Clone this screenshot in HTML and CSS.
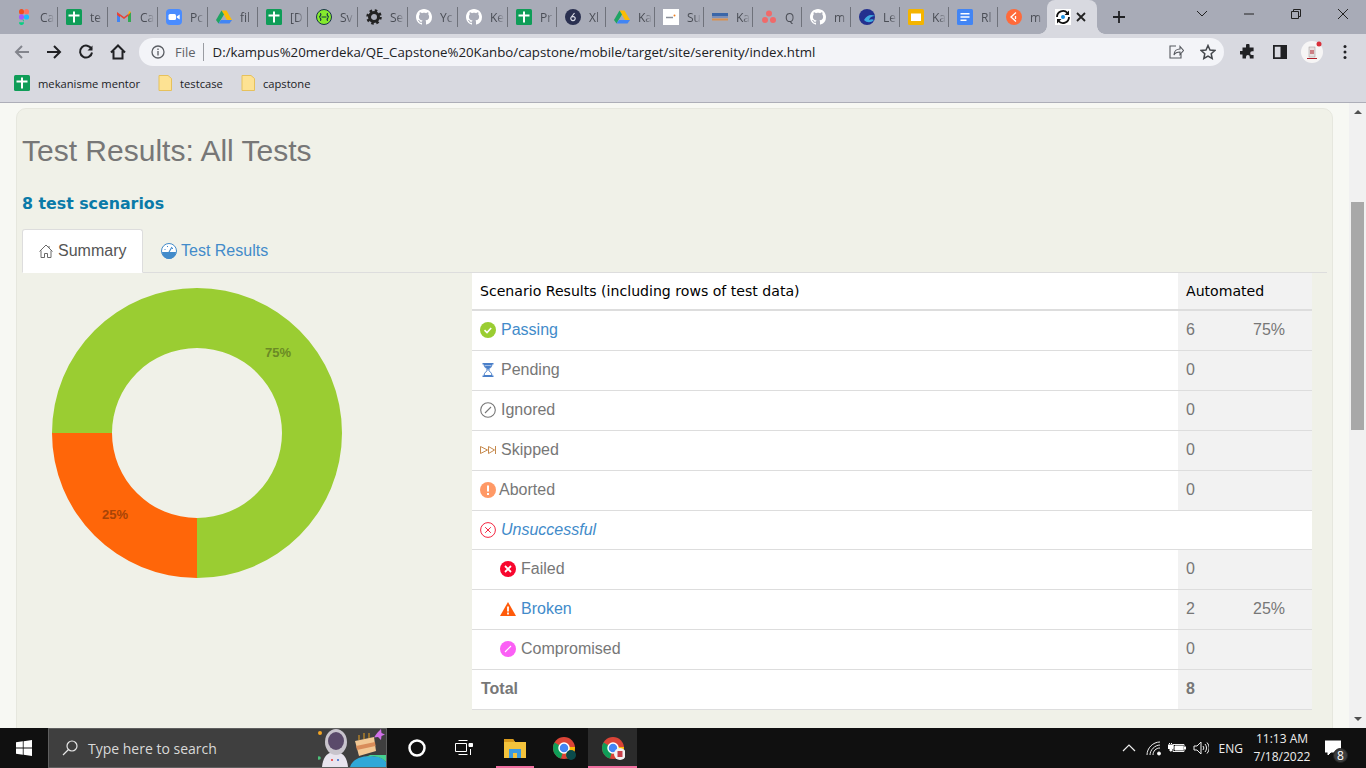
FILE: index.html
```html
<!DOCTYPE html>
<html lang="en">
<head>
<meta charset="utf-8">
<title>Serenity Reports</title>
<link rel="stylesheet" href="styles.css">
</head>
<body>
<svg class="defs" width="0" height="0" aria-hidden="true">
  <symbol id="f-sheet" viewBox="0 0 16 16"><rect width="16" height="16" rx="1.500" fill="#0f9d58"/><path d="M7 2.500h2v3h4.500v2H9v6H7v-6H2.500v-2H7z" fill="#fff"/></symbol>
  <symbol id="f-figma" viewBox="0 0 16 16"><rect x="3" y="0" width="5" height="5.400" rx="2.500" fill="#f24e1e"/><rect x="8" y="0" width="5" height="5.400" rx="2.500" fill="#ff7262"/><rect x="3" y="5.300" width="5" height="5.400" rx="2.500" fill="#a259ff"/><circle cx="10.500" cy="8" r="2.600" fill="#1abcfe"/><path d="M3 13.300a2.500 2.600 0 0 1 5-.1V10.700H5.500A2.500 2.600 0 0 0 3 13.300a2.500 2.600 0 0 0 5 0z" fill="#0acf83"/></symbol>
  <symbol id="f-gmail" viewBox="0 0 16 16"><path d="M1 3v10h3V7l4 3 4-3v6h3V3l-7 5z" fill="#ea4335"/><path d="M1 3v3l3 2.200V13H1z" fill="#4285f4"/><path d="M15 3v10h-3V7.500z" fill="#34a853"/><path d="M13 2l2 1-3 3z" fill="#fbbc04"/></symbol>
  <symbol id="f-zoom" viewBox="0 0 16 16"><rect width="16" height="16" rx="4" fill="#4a8cff"/><rect x="2.500" y="5" width="7.500" height="6" rx="1.500" fill="#fff"/><path d="M10.700 7.500l3-2v5l-3-2z" fill="#fff"/></symbol>
  <symbol id="f-drive" viewBox="0 0 16 16"><path d="M5.500 1.500h5L16 11h-5z" fill="#fbbc04"/><path d="M5.500 1.500L0 11l2.500 3.500L8 5.500z" fill="#1fa463"/><path d="M2.500 14.500h11L16 11H5z" fill="#4285f4"/></symbol>
  <symbol id="f-swag" viewBox="0 0 16 16"><circle cx="8" cy="8" r="7.500" fill="#85ea2d" stroke="#173647"/><path d="M4 4.500c2 0 0 3.500-1 3.500 1 0 3 3.500 1 3.500M12 4.500c-2 0 0 3.500 1 3.500-1 0-3 3.500-1 3.500M5.500 8h5" fill="none" stroke="#173647" stroke-width="1.200"/></symbol>
  <symbol id="f-gear" viewBox="0 0 16 16"><circle cx="8" cy="8" r="4.500" fill="none" stroke="#222" stroke-width="3"/><circle cx="8" cy="8" r="6.500" fill="none" stroke="#222" stroke-width="2.500" stroke-dasharray="2.500 2.600"/></symbol>
  <symbol id="f-gh" viewBox="0 0 16 16"><path fill="#fff" d="M8 0C3.580 0 0 3.580 0 8c0 3.540 2.290 6.530 5.470 7.590.4.070.55-.17.55-.38 0-.19-.01-.82-.01-1.490-2.010.37-2.530-.49-2.690-.94-.09-.23-.48-.94-.82-1.130-.28-.15-.68-.52-.01-.53.63-.01 1.080.58 1.230.82.720 1.210 1.870.87 2.330.66.070-.52.280-.87.510-1.070-1.780-.2-3.640-.89-3.640-3.950 0-.87.310-1.590.820-2.150-.08-.2-.36-1.020.08-2.120 0 0 .67-.21 2.200.82.640-.18 1.320-.27 2-.27s1.360.09 2 .27c1.530-1.040 2.200-.82 2.200-.82.440 1.100.16 1.920.08 2.120.51.56.82 1.270.82 2.150 0 3.070-1.870 3.750-3.650 3.950.29.25.54.73.54 1.480 0 1.070-.01 1.930-.01 2.200 0 .21.15.46.55.38A8.010 8.010 0 0 0 16 8c0-4.420-3.580-8-8-8z"/></symbol>
  <symbol id="f-dark" viewBox="0 0 16 16"><circle cx="8" cy="8" r="8" fill="#2a3050"/><path d="M9.500 4L6 8.500a2.200 2.200 0 1 0 4 0 2 2 0 0 0-3-.5" fill="none" stroke="#d8dae4" stroke-width="1.200"/></symbol>
  <symbol id="f-white" viewBox="0 0 16 16"><rect width="16" height="16" fill="#fff"/><path d="M3 8.500h7" stroke="#8a8f99" stroke-width="1.500"/><circle cx="11.500" cy="6.500" r="1" fill="#f08020"/></symbol>
  <symbol id="f-kem" viewBox="0 0 16 16"><path d="M0 4h16v3H0z" fill="#3b66a8"/><path d="M0 7h16v2H0z" fill="#7c8fb8"/><path d="M0 9.500h16v2H0z" fill="#d89050"/></symbol>
  <symbol id="f-asana" viewBox="0 0 16 16"><circle cx="8" cy="4.500" r="3" fill="#f06a6a"/><circle cx="4" cy="11" r="3" fill="#f06a6a"/><circle cx="12" cy="11" r="3" fill="#f06a6a"/></symbol>
  <symbol id="f-le" viewBox="0 0 16 16"><circle cx="8" cy="8" r="8" fill="#23308f"/><path d="M5 11c3-5 7-6 11-4-3 0-5 1-6 4 2-1 4-1 5 0-3 3-7 3-10 0z" fill="#3fa9e0"/></symbol>
  <symbol id="f-slides" viewBox="0 0 16 16"><rect width="16" height="16" rx="1.500" fill="#f4b400"/><rect x="3" y="4.500" width="10" height="7.500" fill="#fff"/></symbol>
  <symbol id="f-docs" viewBox="0 0 16 16"><rect width="16" height="16" rx="1.500" fill="#4285f4"/><path d="M3.500 4h9v1.500h-9zM3.500 7.300h9v1.500h-9zM3.500 10.500h6V12h-6z" fill="#fff"/></symbol>
  <symbol id="f-orange" viewBox="0 0 16 16"><circle cx="8" cy="8" r="8" fill="#ff6a3a"/><path d="M10 3.500L5 8l5 4.500M9.500 7v3" fill="none" stroke="#fff" stroke-width="1.300"/></symbol>
  <symbol id="f-ser" viewBox="0 0 16 16"><rect width="16" height="16" fill="#fff"/><path d="M2 8a6 6 0 0 1 10.500-4M14 8a6 6 0 0 1-10.500 4" fill="none" stroke="#111" stroke-width="1.800"/><path d="M14 1.500v4.500H9.500zM2 14.500V10h4.500z" fill="#111"/><circle cx="8" cy="8" r="2" fill="#1a8fe0"/></symbol>
</svg>

<header class="chrome">
  <div class="tabstrip">
    <div class="tab"><svg class="fav"><use href="#f-figma"/></svg><span class="tab-t">Ca</span></div>
    <div class="tab"><svg class="fav"><use href="#f-sheet"/></svg><span class="tab-t">te</span></div>
    <div class="tab"><svg class="fav"><use href="#f-gmail"/></svg><span class="tab-t">Ca</span></div>
    <div class="tab"><svg class="fav"><use href="#f-zoom"/></svg><span class="tab-t">Pc</span></div>
    <div class="tab"><svg class="fav"><use href="#f-drive"/></svg><span class="tab-t">fil</span></div>
    <div class="tab"><svg class="fav"><use href="#f-sheet"/></svg><span class="tab-t">[D</span></div>
    <div class="tab"><svg class="fav"><use href="#f-swag"/></svg><span class="tab-t">Sv</span></div>
    <div class="tab"><svg class="fav"><use href="#f-gear"/></svg><span class="tab-t">Se</span></div>
    <div class="tab"><svg class="fav"><use href="#f-gh"/></svg><span class="tab-t">Yc</span></div>
    <div class="tab"><svg class="fav"><use href="#f-gh"/></svg><span class="tab-t">Ke</span></div>
    <div class="tab tab-n"><svg class="fav"><use href="#f-sheet"/></svg><span class="tab-t">Pr</span></div>
    <div class="tab tab-n"><svg class="fav"><use href="#f-dark"/></svg><span class="tab-t">Xl</span></div>
    <div class="tab tab-n"><svg class="fav"><use href="#f-drive"/></svg><span class="tab-t">Ka</span></div>
    <div class="tab tab-n"><svg class="fav"><use href="#f-white"/></svg><span class="tab-t">Su</span></div>
    <div class="tab tab-n"><svg class="fav"><use href="#f-kem"/></svg><span class="tab-t">Ka</span></div>
    <div class="tab tab-n"><svg class="fav"><use href="#f-asana"/></svg><span class="tab-t">Q</span></div>
    <div class="tab tab-n"><svg class="fav"><use href="#f-gh"/></svg><span class="tab-t">m</span></div>
    <div class="tab tab-n"><svg class="fav"><use href="#f-le"/></svg><span class="tab-t">Le</span></div>
    <div class="tab tab-n"><svg class="fav"><use href="#f-slides"/></svg><span class="tab-t">Ka</span></div>
    <div class="tab tab-n"><svg class="fav"><use href="#f-docs"/></svg><span class="tab-t">Rl</span></div>
    <div class="tab tab-n tab-last"><svg class="fav"><use href="#f-orange"/></svg><span class="tab-t">m</span></div>
    <div class="tab-active"><svg class="fav"><use href="#f-ser"/></svg><svg class="tab-x" viewBox="0 0 10 10"><path d="M1 1l8 8M9 1l-8 8"/></svg></div>
    <svg class="newtab" viewBox="0 0 12 12"><path d="M6 0v12M0 6h12"/></svg>
    <div class="winctl">
      <svg class="w-ic w-chev" viewBox="0 0 12 8"><path d="M1 1l5 5 5-5"/></svg>
      <svg class="w-ic w-min" viewBox="0 0 12 12"><path d="M1 6h10"/></svg>
      <svg class="w-ic w-rest" viewBox="0 0 12 12"><path d="M1.500 3.500h7v7h-7zM3.500 3.500v-2h7v7h-2"/></svg>
      <svg class="w-ic w-close" viewBox="0 0 12 12"><path d="M1 1l10 10M11 1L1 11"/></svg>
    </div>
  </div>
  <div class="toolbar">
    <svg class="tb back" viewBox="0 0 16 16"><path d="M15 8H2M8 2L2 8l6 6"/></svg>
    <svg class="tb" viewBox="0 0 16 16"><path d="M1 8h13M8 2l6 6-6 6"/></svg>
    <svg class="tb" viewBox="0 0 16 16"><path d="M13.500 5A6 6 0 1 0 14 8.500"/><path class="solid" d="M14.500 1.500v5h-5z"/></svg>
    <svg class="tb" viewBox="0 0 16 16"><path d="M1 8.500L8 1.500l7 7M3.500 7v7.500h9V7"/></svg>
    <div class="omni">
      <svg class="info" viewBox="0 0 14 14"><circle cx="7" cy="7" r="6"/><path d="M7 6v4.500M7 3.500v1.500"/></svg>
      <span class="scheme">File</span>
      <span class="omni-sep"></span>
      <span class="url">D:/kampus%20merdeka/QE_Capstone%20Kanbo/capstone/mobile/target/site/serenity/index.html</span>
      <svg class="omni-ic" viewBox="0 0 16 16"><path d="M8 2h-6v12h11v-4M6 11c0-4 3-6 6-6V2.500l3.500 4-3.500 4V8c-3 0-5 1-6 3z"/></svg>
      <svg class="omni-ic star" viewBox="0 0 16 16"><path d="M8 1.500l2 4.500 4.800.5-3.600 3.200 1 4.800L8 12.100l-4.200 2.400 1-4.800L1.200 6.500 6 6z"/></svg>
    </div>
    <svg class="ext" viewBox="0 0 16 16"><path d="M6 1.500a1.800 1.800 0 0 1 3.600 0V3.500h4v3.800h-1.500a1.900 1.900 0 0 0 0 3.800h1.500v3.400H9.800v-1.500a1.900 1.900 0 0 0-3.800 0v1.500H2.500v-4H1a1.800 1.800 0 0 1 0-3.600h1.500V3.500H6z"/></svg>
    <svg class="panel" viewBox="0 0 14 14"><path fill-rule="evenodd" d="M0 0h14v14H0zM1.800 1.800v10.400h5.700V1.800z"/></svg>
    <svg class="avatar" viewBox="0 0 22 22"><circle cx="11" cy="11" r="11" fill="#f6f5f5"/><rect x="8" y="6" width="6" height="10" fill="#e8e0e0" stroke="#999" stroke-width=".5"/><path d="M9.500 9h1v4h-1zM11.500 9h1v4h-1z" fill="#b0202a"/><rect x="6" y="17" width="10" height="1" fill="#b0202a"/><circle cx="18" cy="3" r="2.500" fill="#d9303a"/></svg>
    <svg class="dots" viewBox="0 0 4 16"><circle cx="2" cy="2.500" r="1.500"/><circle cx="2" cy="8" r="1.500"/><circle cx="2" cy="13.500" r="1.500"/></svg>
  </div>
  <nav class="bookmarks">
    <svg class="bm-fav"><use href="#f-sheet"/></svg><span class="bm">mekanisme mentor</span>
    <svg class="folder" viewBox="0 0 14 16"><path d="M1 .5h9l3.500 3V15.500H1z"/></svg><span class="bm">testcase</span>
    <svg class="folder" viewBox="0 0 14 16"><path d="M1 .5h9l3.500 3V15.500H1z"/></svg><span class="bm">capstone</span>
  </nav>
</header>

<div class="viewport">
  <main class="content">
    <section class="card">
      <h2 class="title">Test Results: All Tests</h2>
      <h3 class="count">8 test scenarios</h3>
      <div class="tabs">
        <a class="rtab rtab-on"><svg class="rtab-ic home" viewBox="0 0 16 16"><path d="M1.500 8.500L8 2l6.500 6.500M3 7.500V14.500h3.500v-4h3v4H13V7.500M11 3v2"/></svg>Summary</a>
        <a class="rtab"><svg class="rtab-ic" viewBox="0 0 16 16"><circle cx="8" cy="8" r="7.500" fill="#fff" stroke="#428bca"/><path d="M1 9h14a7 7 0 0 1-14 0z" fill="#428bca"/><path d="M8 9l3-5" stroke="#428bca" stroke-width="1.200"/><path d="M3.500 6.500h1M6 3.500h1M11 5.500h1" stroke="#428bca"/></svg>Test Results</a>
      </div>
      <div class="summary">
        <div class="chart-col">
          <svg class="donut" width="290" height="290" viewBox="0 0 290 290" role="img" aria-label="Result chart">
            <path fill="#9acd32" d="M145 290A145 145 0 1 0 0 145H60A85 85 0 1 1 145 230Z"/>
            <path fill="#ff6609" d="M0 145A145 145 0 0 0 145 290V230A85 85 0 0 1 60 145Z"/>
            <text class="lbl lbl-g" x="226" y="66">75%</text>
            <text class="lbl lbl-o" x="63" y="228">25%</text>
          </svg>
        </div>
        <table class="res">
          <colgroup><col class="c1"><col class="c2"><col class="c3"></colgroup>
          <thead>
            <tr><th>Scenario Results (including rows of test data)</th><th class="auto" colspan="2">Automated</th></tr>
          </thead>
          <tbody>
            <tr><td><svg class="ic" viewBox="0 0 16 16"><circle cx="8" cy="8" r="8" fill="#9acd32"/><path d="M4.500 8.200l2.500 2.300 4.200-4.500" fill="none" stroke="#fff" stroke-width="1.600"/></svg><a class="lnk">Passing</a></td><td class="v">6</td><td class="v p">75%</td></tr>
            <tr><td><svg class="ic" viewBox="0 0 16 16"><path d="M2.500 1h11v1.500h-11zM2.500 13.500h11V15h-11z" fill="#4a7fc9"/><path d="M4 2.500h8c0 3-3 4-3.300 5.500.3 1.500 3.300 2.500 3.300 5.500H4c0-3 3-4 3.300-5.500C7 6.500 4 5.500 4 2.500z" fill="none" stroke="#4a7fc9"/><path d="M4.500 3.500h7C11 5.500 8.500 6.500 8 8c-.5-1.500-3-2.500-3.500-4.500z" fill="#4a7fc9"/></svg><span>Pending</span></td><td class="v">0</td><td class="v p"></td></tr>
            <tr><td><svg class="ic" viewBox="0 0 16 16"><circle cx="8" cy="8" r="7.300" fill="none" stroke="#777" stroke-width="1.100"/><path d="M5 11l6-6" stroke="#777" stroke-width="1.100"/></svg><span>Ignored</span></td><td class="v">0</td><td class="v p"></td></tr>
            <tr><td><svg class="ic" viewBox="0 0 16 16"><path d="M.5 4.500l7 3.500-7 3.500zM8.500 4.500l6 3.500-6 3.500zM15.500 4v8" fill="none" stroke="#c68a4e" stroke-width="1"/></svg><span>Skipped</span></td><td class="v">0</td><td class="v p"></td></tr>
            <tr><td><svg class="ic ic-tight" viewBox="0 0 16 16"><circle cx="8" cy="8" r="8" fill="#ff9966"/><path d="M8 3.500v6M8 11v2" stroke="#fff" stroke-width="2"/></svg><span>Aborted</span></td><td class="v">0</td><td class="v p"></td></tr>
            <tr class="uns"><td colspan="3"><svg class="ic" viewBox="0 0 16 16"><circle cx="8" cy="8" r="7.400" fill="none" stroke="#f4253f" stroke-width="1"/><path d="M5.200 5.200l5.600 5.600M10.800 5.200l-5.600 5.600" stroke="#f4253f"/></svg><a class="lnk em">Unsuccessful</a></td></tr>
            <tr class="sub"><td><svg class="ic" viewBox="0 0 16 16"><circle cx="8" cy="8" r="8" fill="#f8072e"/><path d="M5 5l6 6M11 5l-6 6" stroke="#fff" stroke-width="1.800"/></svg><span>Failed</span></td><td class="v">0</td><td class="v p"></td></tr>
            <tr class="sub"><td><svg class="ic" viewBox="0 0 16 16"><path d="M8 1l8 14H0z" fill="#ff5a0a"/><path d="M8 5.500v5M8 11.500v2" stroke="#fff" stroke-width="1.800"/></svg><a class="lnk">Broken</a></td><td class="v">2</td><td class="v p">25%</td></tr>
            <tr class="sub"><td><svg class="ic" viewBox="0 0 16 16"><circle cx="8" cy="8" r="8" fill="#fb5ff5"/><path d="M5 11l6-6" stroke="#fff" stroke-width="1.100"/></svg><span>Compromised</span></td><td class="v">0</td><td class="v p"></td></tr>
            <tr class="tot"><td>Total</td><td class="v">8</td><td class="v p"></td></tr>
          </tbody>
        </table>
      </div>
    </section>
  </main>
  <div class="scrollbar">
    <span class="arrow-up"></span>
    <span class="thumb"></span>
    <span class="arrow-down"></span>
  </div>
</div>

<footer class="taskbar">
  <svg class="start" viewBox="0 0 16 16"><path d="M0 2.300l6.800-1v6.300H0zM7.600 1.200L16 0v7.600H7.600zM0 8.400h6.800v6.300L0 13.700zM7.600 8.400H16V16l-8.400-1.200z"/></svg>
  <div class="search">
    <svg class="s-ic" viewBox="0 0 16 16"><circle cx="10" cy="6" r="5"/><path d="M6.500 9.500L1 15"/></svg>
    <span class="s-t">Type here to search</span>
    <svg class="s-art" width="68" height="40" viewBox="0 0 68 40"><circle cx="2" cy="6" r="2" fill="#f5a623"/><circle cx="1" cy="31" r="1.800" fill="#4cc27a"/><path d="M4 40c1-10 5-15 13-15s12 5 13 15z" fill="#e8e4ee"/><ellipse cx="18" cy="15" rx="11" ry="13" fill="#c8c4cc"/><ellipse cx="18" cy="14" rx="8" ry="9" fill="#5a4a6a"/><circle cx="14" cy="33" r="1" fill="#e33"/><circle cx="20" cy="33" r="1" fill="#36c"/><path d="M37 14l19-4 2 14-17 5z" fill="#f2c894"/><path d="M38 19l19-4 .5 4-18.500 4z" fill="#d98d5a"/><path d="M41 13V8M46 12V6M51 11V6" stroke="#e8a020"/><path d="M60 5l3-3 .5 4 3.500 1.500-3.500 1.500-.5 4-3-3-4 .5 2-3z" fill="#d070e8"/><path d="M32 40c2-7 10-11 20-11s14 3 16 6v5z" fill="#2fa8d8"/><path d="M48 30c8-2 16 0 20 5v-7H52z" fill="#46d090"/></svg>
  </div>
  <div class="tb-apps">
    <span class="app"><svg class="cortana" viewBox="0 0 18 18"><circle cx="9" cy="9" r="7.500"/></svg></span>
    <span class="app"><svg class="tview" viewBox="0 0 18 18"><path d="M3.500 1.500h9M.5 4.500h11v8H.5zM3.500 15.500h9"/><path class="solid-w" d="M14 4.500h3.500v3H14zM15.500 10v6" /></svg></span>
    <span class="app app-u"><svg class="appic" viewBox="0 0 24 24"><path d="M1 3h9l2 3h11v16H1z" fill="#f3c33c"/><path d="M1 3h9l2 3H1z" fill="#d99a1c"/><path d="M6 13h12v9H6z" fill="#3b9ae0"/><path d="M10 17h4v5h-4z" fill="#f3c33c"/></svg></span>
    <span class="app"><svg class="appic" viewBox="0 0 24 24"><circle cx="12" cy="12" r="11" fill="#db4437"/><path d="M12 12L2.500 6.500A11 11 0 0 0 9 22.600z" fill="#0f9d58"/><path d="M12 12l3 10.500A11 11 0 0 0 23 11H12z" fill="#fbbc04"/><circle cx="12" cy="12" r="5" fill="#4285f4" stroke="#fff" stroke-width="1.500"/><circle cx="19" cy="19" r="5" fill="#0b4a4a"/></svg></span>
    <span class="app app-on app-u"><svg class="appic" viewBox="0 0 24 24"><circle cx="12" cy="12" r="11" fill="#db4437"/><path d="M12 12L2.500 6.500A11 11 0 0 0 9 22.600z" fill="#0f9d58"/><path d="M12 12l3 10.500A11 11 0 0 0 23 11H12z" fill="#fbbc04"/><circle cx="12" cy="12" r="5" fill="#4285f4" stroke="#fff" stroke-width="1.500"/><circle cx="19" cy="18" r="6" fill="#f2f2f2"/><rect x="16.500" y="15" width="5" height="6" fill="#c8404a"/></svg></span>
  </div>
  <div class="tray">
    <svg class="t-ic caret" viewBox="0 0 14 8"><path d="M1 7l6-6 6 6"/></svg>
    <svg class="t-ic wifi" viewBox="0 0 16 16"><path d="M1 15C1 8 7 2 14 2M4 15c0-5 5-10 10-10M7 15c0-4 3-7 7-7"/><circle class="solid-w" cx="13" cy="13.500" r="1.500"/></svg>
    <svg class="t-ic batt" viewBox="0 0 18 12"><path d="M5 2.500h11v7H5z"/><path class="solid-w" d="M7 4h8v4H7zM16.500 5H18v2h-1.500zM1 1.500h1M3 1.500h1M0 3h5v3.500H3.500V9H2V6.500H0z"/></svg>
    <svg class="t-ic vol" viewBox="0 0 16 14"><path d="M1 5h3l4-4v12l-4-4H1zM10 5a3 3 0 0 1 0 4M12 3a6 6 0 0 1 0 8M14 1.500a8 8 0 0 1 0 11"/></svg>
    <span class="eng">ENG</span>
    <div class="clock"><span>11:13 AM</span><span>7/18/2022</span></div>
    <span class="notif"><svg class="bubble" viewBox="0 0 16 16"><path class="solid-w" d="M0 1h16v11H6l-3 3v-3H0z"/></svg><span class="badge">8</span></span>
  </div>
</footer>
</body>
</html>
```
FILE: styles.css
```css
* { box-sizing: border-box; }
html, body { margin: 0; height: 100%; }
body {
  width: 1366px; height: 768px; overflow: hidden;
  display: flex; flex-direction: column;
  font-family: "Liberation Sans", Arial, sans-serif;
  background: #f7f8f3;
}
.defs { position: absolute; }

/* browser chrome */
.chrome { flex: none; }
.tabstrip { height: 34px; background: #a8abb7; display: flex; align-items: stretch; padding-left: 8px; }
.tab { width: 50px; flex: none; display: flex; align-items: center; gap: 8px; padding-left: 8px; position: relative; }
.tab-n { width: 49px; }
.tab::after { content: ""; position: absolute; right: 0; top: 7px; height: 20px; width: 1px; background: #6f727b; }
.tab-last::after { display: none; }
.fav { width: 16px; height: 16px; flex: none; }
.tab-t {
  font: 12px "Open Sans", sans-serif; color: #4a4d55; width: 14px; overflow: hidden; white-space: nowrap;
  -webkit-mask-image: linear-gradient(90deg, #000 50%, transparent);
  mask-image: linear-gradient(90deg, #000 50%, transparent);
}
.tab-active { width: 50px; flex: none; background: #d8d9e0; border-radius: 8px 8px 0 0; display: flex; align-items: center; padding-left: 8px; gap: 5px; position: relative; }
.tab-active::before, .tab-active::after { content: ""; position: absolute; bottom: 0; width: 8px; height: 8px; }
.tab-active::before { left: -8px; background: radial-gradient(circle at 0 0, transparent 7.500px, #d8d9e0 8px); }
.tab-active::after { right: -8px; background: radial-gradient(circle at 100% 0, transparent 7.500px, #d8d9e0 8px); }
.tab-x { width: 10px; height: 10px; fill: none; stroke: #222; stroke-width: 1.800; }
.newtab { width: 12px; height: 12px; margin: 11px 0 0 16px; fill: none; stroke: #202124; stroke-width: 1.800; }
.winctl { margin-left: auto; display: flex; align-items: center; padding-right: 17px; gap: 35px; padding-bottom: 6px; }
.w-ic { width: 12px; height: 12px; fill: none; stroke: #222; stroke-width: 1; }

.toolbar { height: 36px; background: #d8d9e0; display: flex; align-items: center; padding-left: 14px; }
.tb { width: 16px; height: 16px; margin-right: 16px; fill: none; stroke: #202124; stroke-width: 2; flex: none; }
.tb.back { stroke: #83858d; }
.tb .solid { fill: #202124; stroke: none; }
.omni { width: 1085px; margin-left: -3px; height: 28px; border-radius: 14px; background: #f3f4f8; display: flex; align-items: center; padding-left: 12px; flex: none; }
.info { width: 14px; height: 14px; fill: none; stroke: #5a5d63; stroke-width: 1.300; flex: none; }
.scheme { font: 13px "Open Sans", sans-serif; color: #5f6368; margin-left: 10px; }
.omni-sep { width: 1px; height: 18px; background: #9a9ca2; margin: 0 9px 0 7px; }
.url { font: 13.250px "Open Sans", sans-serif; color: #202124; white-space: nowrap; flex: 1; }
.omni-ic { width: 16px; height: 16px; fill: none; stroke: #55585e; stroke-width: 1.100; flex: none; margin-right: 16px; }
.omni-ic.star { stroke-width: 1.500; stroke: #44474c; margin-right: 8px; }
.ext { width: 16px; height: 16px; fill: #202124; margin-left: 16px; flex: none; }
.panel { width: 14px; height: 14px; fill: #202124; margin-left: 17px; flex: none; }
.avatar { width: 22px; height: 22px; margin-left: 14px; flex: none; }
.dots { width: 4px; height: 16px; fill: #202124; margin-left: 20px; flex: none; }

.bookmarks { height: 33px; background: #d8d9e0; border-bottom: 1px solid #adaeb8; display: flex; align-items: center; padding: 0 0 6px 14px; }
.bm-fav { width: 16px; height: 16px; margin-right: 8px; }
.bm { font: 11.200px "Open Sans", sans-serif; color: #202124; margin-right: 18px; }
.folder { width: 14px; height: 16px; fill: #fde293; stroke: #e6c15c; margin-right: 8px; }

/* page */
.viewport { height: 625px; flex: none; display: flex; overflow: hidden; }
.content { flex: 1; min-width: 0; padding: 5px 16px 0; }
.card { background: #f0f1e8; border: 1px solid #e6e7de; border-radius: 10px; padding: 0 5px 40px; }
.title { margin: 25px 0 0; font-size: 30px; line-height: 33px; font-weight: 400; color: #777; }
.count { margin: 27px 0 0; font: bold 15.800px/20px "DejaVu Sans", sans-serif; color: #0a7aa8; }
.tabs { margin-top: 15px; height: 44px; border-bottom: 1px solid #ddd; display: flex; }
.rtab { height: 44px; padding: 0 15px; display: flex; align-items: center; font-size: 16px; color: #428bca; }
.rtab-on { width: 121px; padding-left: 15px; background: #fff; color: #555; border: 1px solid #ddd; border-bottom-color: #fff; border-radius: 3px 3px 0 0; }
.rtab-ic { width: 16px; height: 16px; margin-right: 4px; flex: none; }
.rtab + .rtab { padding-left: 18px; }
.home { fill: none; stroke: #6a6a6a; stroke-width: 1; }
.summary { display: flex; align-items: flex-start; }
.chart-col { width: 450px; flex: none; }
.donut { display: block; margin: 15px 0 0 30px; }
.lbl { font: bold 13px "Liberation Sans", sans-serif; text-anchor: middle; dominant-baseline: middle; }
.lbl-g { fill: #6b8a25; }
.lbl-o { fill: #a84407; }

.res { width: 840px; table-layout: fixed; border-collapse: separate; border-spacing: 0; background: #fff; }
.c1 { width: 706px; } .c2 { width: 67px; } .c3 { width: 67px; }
.res th { height: 38px; padding: 0 8px; font: 14.100px "DejaVu Sans", sans-serif; color: #000; text-align: left; font-weight: 400; border-bottom: 2px solid #ddd; }
.res th.auto { background: #f2f2f2; }
.res td { height: 40px; padding: 0 8px 2px; font-size: 16px; color: #777; border-bottom: 1px solid #ddd; white-space: nowrap; }
.res .uns td { height: 39px; padding-bottom: 0; }
.res td.v { background: #f2f2f2; }
.res .sub td:first-child { padding-left: 28px; }
.res .tot td { font-weight: 700; }
.res .tot td:first-child { padding-left: 9px; }
.ic { width: 16px; height: 16px; margin-right: 5px; vertical-align: -3px; }
.ic-tight { margin-right: 3px; }
.lnk { color: #428bca; }
.em { font-style: italic; }

.scrollbar { width: 17px; flex: none; background: #f1f1f1; display: flex; flex-direction: column; align-items: center; }
.arrow-up { margin-top: 7px; border: 4px solid transparent; border-top: 0; border-bottom: 4px solid #505050; }
.thumb { width: 13px; height: 228px; background: #a8a8a8; margin-top: 88px; }
.arrow-down { margin-top: auto; margin-bottom: 7px; border: 4px solid transparent; border-bottom: 0; border-top: 4px solid #505050; }

/* taskbar */
.taskbar { height: 40px; flex: none; background: #101010; display: flex; align-items: stretch; }
.start { width: 16px; height: 16px; fill: #fff; margin: 12px 16px 0 16px; }
.search { width: 339px; background: #3f3f3f; border: 1px solid #5f5f5f; display: flex; align-items: center; position: relative; padding-left: 13px; }
.s-ic { width: 16px; height: 16px; fill: none; stroke: #e6e6e6; stroke-width: 1.200; }
.s-t { font: 14px "Open Sans", sans-serif; color: #d9d9d9; margin-left: 10px; }
.s-art { position: absolute; right: 0; bottom: 0; }
.tb-apps { display: flex; padding-left: 5px; }
.app { width: 49px; display: flex; align-items: center; justify-content: center; position: relative; }
.app-on { background: #2b2b2b; }
.app-u::after { content: ""; position: absolute; left: 6px; right: 5px; bottom: 0; height: 2px; background: #f06fa0; }
.app-on::after { left: 0; right: 0; }
.cortana { width: 18px; height: 18px; fill: none; stroke: #fff; stroke-width: 2.500; }
.tview { width: 18px; height: 18px; fill: none; stroke: #fff; stroke-width: 1; margin-right: 4px; }
.solid-w { fill: #fff; stroke: #fff; }
.appic { width: 24px; height: 24px; }
.tray { margin-left: auto; display: flex; align-items: center; color: #fff; }
.t-ic { fill: none; stroke: #eee; stroke-width: 1; flex: none; }
.caret { width: 14px; height: 8px; stroke-width: 1.200; margin-right: 10px; }
.wifi { width: 16px; height: 16px; margin-right: 6px; }
.batt { width: 18px; height: 12px; margin-right: 7px; }
.vol { width: 16px; height: 14px; margin-right: 10px; }
.eng { font: 12px "Open Sans", sans-serif; color: #eee; }
.clock { width: 80px; margin-left: -1px; display: flex; flex-direction: column; align-items: center; font: 12px/18px "Open Sans", sans-serif; color: #eee; }
.notif { width: 41px; margin-left: 3px; position: relative; display: flex; }
.bubble { width: 16px; height: 16px; }
.badge { position: absolute; left: 8px; top: 8px; width: 15px; height: 15px; border-radius: 50%; background: #3d3d3d; border: 1px solid #222; color: #fff; font: 12px/13px "Open Sans", sans-serif; text-align: center; }
```
